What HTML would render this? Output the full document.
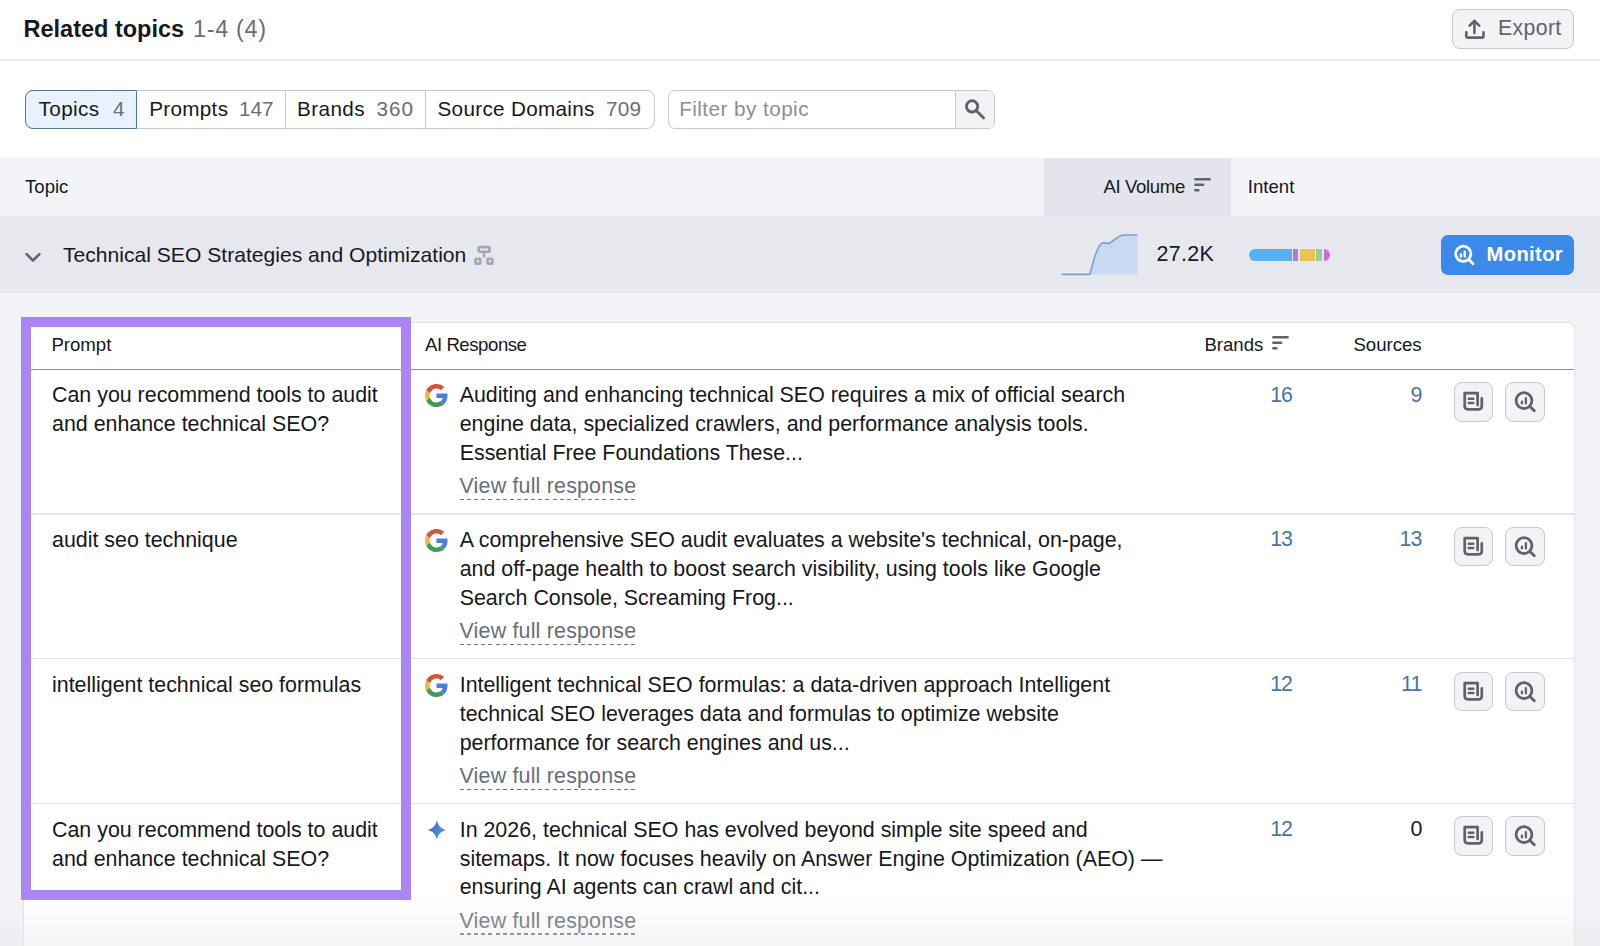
<!DOCTYPE html>
<html><head><meta charset="utf-8">
<style>
*{box-sizing:border-box;margin:0;padding:0}
html,body{width:1600px;height:946px;overflow:hidden;background:#fff;font-family:"Liberation Sans",sans-serif;color:#17181c}
.a{position:absolute;white-space:nowrap}
svg{position:absolute;overflow:visible}
</style></head><body>
<div class="a" style="left:23.5px;top:13.96px;font-size:23.5px;line-height:30px;font-weight:700;">Related topics</div>
<div class="a" style="left:193px;top:13.86px;font-size:23.5px;line-height:30px;color:#6b6d78;letter-spacing:0.65px;">1-4 (4)</div>
<div class="a" style="left:0px;top:59px;width:1600px;height:2px;background:#ebebee"></div>
<div class="a" style="left:1452px;top:9px;width:122px;height:40px;background:#f3f3f6;border:1.5px solid #c6c8cf;border-radius:8px"></div>
<svg style="left:1465px;top:19px" width="21" height="20" viewBox="0 0 21 20"><path d="M9.4 2V14" stroke="#5f626d" stroke-width="2.6" fill="none" stroke-linecap="round"/><path d="M4.6 6.6L9.4 1.8L14.2 6.6" stroke="#5f626d" stroke-width="2.6" fill="none" stroke-linecap="round" stroke-linejoin="round"/><path d="M1.3 13.4V17.6Q1.3 18.6 2.3 18.6H17.5Q18.5 18.6 18.5 17.6V13.4" stroke="#5f626d" stroke-width="2.6" fill="none" stroke-linecap="round" stroke-linejoin="round"/></svg>
<div class="a" style="left:1498px;top:12.65px;font-size:21.2px;line-height:30px;color:#5f626d;letter-spacing:0.4px;">Export</div>
<div class="a" style="left:25px;top:89.5px;width:630px;height:39.5px;background:#fff;border:1.5px solid #c6c8cf;border-radius:8px"></div>
<div class="a" style="left:25px;top:89.5px;width:112px;height:39.5px;background:#e8f2fc;border:1.8px solid #5a7790;border-radius:8px 0 0 8px"></div>
<div class="a" style="left:284.75px;top:90px;width:1.5px;height:38.5px;background:#c6c8cf"></div>
<div class="a" style="left:424.75px;top:90px;width:1.5px;height:38.5px;background:#c6c8cf"></div>
<div class="a" style="left:38.5px;top:94.08px;font-size:20.7px;line-height:30px;letter-spacing:0.4px;">Topics</div>
<div class="a" style="left:113px;top:94.08px;font-size:20.7px;line-height:30px;color:#6b6d78;">4</div>
<div class="a" style="left:149.2px;top:94.08px;font-size:20.7px;line-height:30px;letter-spacing:0.3px;">Prompts</div>
<div class="a" style="left:239px;top:94.08px;font-size:20.7px;line-height:30px;color:#6b6d78;">147</div>
<div class="a" style="left:297px;top:94.08px;font-size:20.7px;line-height:30px;letter-spacing:0.4px;">Brands</div>
<div class="a" style="left:376.5px;top:94.08px;font-size:20.7px;line-height:30px;color:#6b6d78;letter-spacing:1px;">360</div>
<div class="a" style="left:437.5px;top:94.08px;font-size:20.7px;line-height:30px;letter-spacing:0.3px;">Source Domains</div>
<div class="a" style="left:605.9px;top:94.08px;font-size:20.7px;line-height:30px;color:#6b6d78;letter-spacing:0.3px;">709</div>
<div class="a" style="left:667.5px;top:89.5px;width:327.5px;height:39.5px;background:#fff;border:1.5px solid #c6c8cf;border-radius:7px"></div>
<div class="a" style="left:955px;top:91px;width:38.5px;height:36.5px;background:#f3f3f6;border-left:1.5px solid #c6c8cf;border-radius:0 6px 6px 0"></div>
<div class="a" style="left:679.2px;top:94.08px;font-size:20.7px;line-height:30px;color:#8b8d96;letter-spacing:0.45px;">Filter by topic</div>
<svg style="left:964px;top:97px" width="22" height="22" viewBox="0 0 22 22"><circle cx="8.1" cy="9.4" r="5.6" stroke="#5f626d" stroke-width="2.9" fill="none"/><path d="M12.4 13.7L19.6 20.9" stroke="#5f626d" stroke-width="2.8" stroke-linecap="round"/></svg>
<div class="a" style="left:0px;top:158px;width:1600px;height:58px;background:#f3f4f8"></div>
<div class="a" style="left:1044px;top:158px;width:187px;height:58px;background:#e4e5ec"></div>
<div class="a" style="left:25px;top:174.06px;font-size:18.6px;line-height:26px;">Topic</div>
<div class="a" style="left:1103.4px;top:174.06px;font-size:18.6px;line-height:26px;letter-spacing:-0.35px;">AI Volume</div>
<svg style="left:1193px;top:177px" width="20" height="16" viewBox="0 0 20 16"><path d="M2.3 2.2H16.7M2.3 7.8H10.2M2.3 13.3H5.4" stroke="#5f626d" stroke-width="2.4" stroke-linecap="round"/></svg>
<div class="a" style="left:1247.8px;top:174.06px;font-size:18.6px;line-height:26px;">Intent</div>
<div class="a" style="left:0px;top:216px;width:1600px;height:77px;background:#e7e8ee"></div>
<div class="a" style="left:0px;top:291.5px;width:1600px;height:2px;background:#dfe0e6"></div>
<svg style="left:24px;top:251px" width="18" height="13" viewBox="0 0 18 13"><path d="M2.6 3.1L9 9.5L15.4 3.1" stroke="#62656f" stroke-width="2.6" fill="none" stroke-linecap="round" stroke-linejoin="round"/></svg>
<div class="a" style="left:63px;top:240.19px;font-size:21.1px;line-height:30px;">Technical SEO Strategies and Optimization</div>
<svg style="left:473px;top:244px" width="22" height="23" viewBox="0 0 22 23"><rect x="5.7" y="3.1" width="10.8" height="4.6" rx="0.6" stroke="#a5a7b0" stroke-width="2.6" fill="none"/><path d="M11.1 9V13.5" stroke="#a5a7b0" stroke-width="2.4"/><rect x="2.5" y="14.7" width="4.7" height="4.9" rx="0.6" stroke="#a5a7b0" stroke-width="2.6" fill="none"/><rect x="14.5" y="14.7" width="4.9" height="4.9" rx="0.6" stroke="#a5a7b0" stroke-width="2.6" fill="none"/></svg>
<svg style="left:1060px;top:232px" width="80" height="46" viewBox="0 0 80 46"><path d="M29.7 42.4C32 35 34 26 36.5 20C38.5 15 41 11 43 10.9L49.4 11.4C53 9 57 5 62.5 3H77.5V42.4Z" fill="#c7daf1"/><path d="M1.6 42.4H29.7C32 35 34 26 36.5 20C38.5 15 41 11 43 10.9L49.4 11.4C53 9 57 5 62.5 3H77.5" stroke="#7aa2cb" stroke-width="1.6" fill="none"/></svg>
<div class="a" style="left:1156.4px;top:239.35px;font-size:21.5px;line-height:30px;letter-spacing:0.3px;">27.2K</div>
<div class="a" style="left:1248.5px;top:249px;width:43px;height:11.5px;background:#58aff4;border-radius:6px 0 0 6px"></div>
<div class="a" style="left:1292.6px;top:249px;width:5.8px;height:11.5px;background:#a47fe3"></div>
<div class="a" style="left:1300.2px;top:249px;width:14.5px;height:11.5px;background:#f2c04e"></div>
<div class="a" style="left:1316.4px;top:249px;width:5.8px;height:11.5px;background:#90d09b"></div>
<div class="a" style="left:1323.8px;top:249px;width:6px;height:11.5px;background:#d066d8;border-radius:0 6px 6px 0"></div>
<div class="a" style="left:1441px;top:234.5px;width:133px;height:40.5px;background:#3b89e8;border-radius:7px"></div>
<svg style="left:1452px;top:243px" width="24" height="24" viewBox="0 0 24 24"><circle cx="11.3" cy="10.8" r="7.6" stroke="#fff" stroke-width="2.8" fill="none"/><path d="M17 16.6L21 20.8" stroke="#fff" stroke-width="2.8" stroke-linecap="round"/><path d="M9 11.5V13.6M12.8 8.6V13.6" stroke="#fff" stroke-width="2.4" stroke-linecap="round"/></svg>
<div class="a" style="left:1486.6px;top:239.04px;font-size:20.1px;line-height:30px;color:#fff;font-weight:700;letter-spacing:0.4px;">Monitor</div>
<div class="a" style="left:0px;top:293px;width:1600px;height:653px;background:#f3f4f8"></div>
<div class="a" style="left:22.8px;top:322px;width:1552px;height:624px;background:#fff;border:1.2px solid #e2e3e8;border-bottom:none;border-radius:7px 7px 0 0"></div>
<div class="a" style="left:51.4px;top:332.26px;font-size:18.6px;line-height:26px;">Prompt</div>
<div class="a" style="left:425px;top:332.26px;font-size:18.6px;line-height:26px;letter-spacing:-0.45px;">AI Response</div>
<div class="a" style="left:1204.4px;top:332.26px;font-size:18.6px;line-height:26px;">Brands</div>
<svg style="left:1270.5px;top:335px" width="20" height="16" viewBox="0 0 20 16"><path d="M2.3 2.2H16.7M2.3 7.8H10.2M2.3 13.3H5.4" stroke="#5f626d" stroke-width="2.4" stroke-linecap="round"/></svg>
<div class="a" style="left:1353.4px;top:332.26px;font-size:18.6px;line-height:26px;">Sources</div>
<div class="a" style="left:22px;top:368.5px;width:1552px;height:1.6px;background:#8e9097"></div>
<div class="a" style="left:52px;top:381.38px;font-size:21.4px;line-height:29px;">Can you recommend tools to audit</div>
<div class="a" style="left:52px;top:410.18px;font-size:21.4px;line-height:29px;">and enhance technical SEO?</div>
<svg style="left:425px;top:384.0px" width="23" height="23" viewBox="0 0 48 48"><path fill="#d2533f" d="M24 9.5c3.54 0 6.71 1.22 9.21 3.6l6.85-6.85C35.9 2.38 30.47 0 24 0 14.62 0 6.51 5.38 2.56 13.22l7.98 6.19C12.43 13.72 17.74 9.5 24 9.5z"/><path fill="#4a80dc" d="M46.98 24.55c0-1.57-.15-3.09-.38-4.55H24v9.02h12.94c-.58 2.96-2.26 5.48-4.78 7.18l7.73 6c4.51-4.18 7.09-10.36 7.09-17.65z"/><path fill="#e9b940" d="M10.53 28.59c-.48-1.45-.76-2.99-.76-4.59s.27-3.14.76-4.59l-7.98-6.19C.92 16.46 0 20.12 0 24c0 3.88.92 7.54 2.56 10.78l7.97-6.19z"/><path fill="#45995a" d="M24 48c6.48 0 11.93-2.13 15.89-5.81l-7.73-6c-2.15 1.45-4.92 2.3-8.16 2.3-6.26 0-11.57-4.22-13.47-9.91l-7.98 6.19C6.51 42.62 14.62 48 24 48z"/></svg>
<div class="a" style="left:459.7px;top:381.38px;font-size:21.4px;line-height:29px;">Auditing and enhancing technical SEO requires a mix of official search</div>
<div class="a" style="left:459.7px;top:410.18px;font-size:21.4px;line-height:29px;">engine data, specialized crawlers, and performance analysis tools.</div>
<div class="a" style="left:459.7px;top:438.98px;font-size:21.4px;line-height:29px;">Essential Free Foundations These...</div>
<div class="a" style="left:459.5px;top:472.38px;font-size:21.4px;line-height:29px;color:#6b6d78;letter-spacing:0.2px;">View full response</div>
<div class="a" style="left:459.5px;top:498.95px;width:175px;height:1.5px;background:repeating-linear-gradient(to right,#70727c 0 4px,transparent 4px 7.12px)"></div>
<div class="a" style="left:1292px;top:380.68px;font-size:21.4px;line-height:29px;color:#4674ab;transform:translateX(-100%);letter-spacing:-1px;">16</div>
<div class="a" style="left:1421.3px;top:380.68px;font-size:21.4px;line-height:29px;color:#4674ab;transform:translateX(-100%);letter-spacing:-1px;">9</div>
<div class="a" style="left:1453.5px;top:382.0px;width:39.5px;height:39.5px;background:#f3f3f6;border:1.5px solid #c6c8cf;border-radius:8px"></div>
<div class="a" style="left:1505.2px;top:382.0px;width:39.5px;height:39.5px;background:#f3f3f6;border:1.5px solid #c6c8cf;border-radius:8px"></div>
<svg style="left:1462px;top:390.0px" width="24" height="24" viewBox="0 0 24 24"><path d="M15.6 15.1V3.1H2.7V16.1Q2.7 19.3 5.9 19.3H16.6Q19.8 19.3 19.8 16.1V8.3" stroke="#5f626d" stroke-width="2.7" fill="none" stroke-linecap="round" stroke-linejoin="round"/><path d="M6.7 8.8H11.3M6.7 13H11.3" stroke="#5f626d" stroke-width="2.5" stroke-linecap="round"/></svg>
<svg style="left:1512px;top:389.0px" width="26" height="26" viewBox="0 0 26 26"><circle cx="12" cy="11.6" r="7.9" stroke="#5f626d" stroke-width="2.8" fill="none"/><path d="M17.9 17.5L22.3 21.8" stroke="#5f626d" stroke-width="2.8" stroke-linecap="round"/><path d="M9.9 12.6V14.4M13.9 9.2V14.4" stroke="#5f626d" stroke-width="2.3" stroke-linecap="round"/></svg>
<div class="a" style="left:22px;top:513.0px;width:1552px;height:1.6px;background:#e4e5ea"></div>
<div class="a" style="left:52px;top:526.18px;font-size:21.4px;line-height:29px;">audit seo technique</div>
<svg style="left:425px;top:528.8px" width="23" height="23" viewBox="0 0 48 48"><path fill="#d2533f" d="M24 9.5c3.54 0 6.71 1.22 9.21 3.6l6.85-6.85C35.9 2.38 30.47 0 24 0 14.62 0 6.51 5.38 2.56 13.22l7.98 6.19C12.43 13.72 17.74 9.5 24 9.5z"/><path fill="#4a80dc" d="M46.98 24.55c0-1.57-.15-3.09-.38-4.55H24v9.02h12.94c-.58 2.96-2.26 5.48-4.78 7.18l7.73 6c4.51-4.18 7.09-10.36 7.09-17.65z"/><path fill="#e9b940" d="M10.53 28.59c-.48-1.45-.76-2.99-.76-4.59s.27-3.14.76-4.59l-7.98-6.19C.92 16.46 0 20.12 0 24c0 3.88.92 7.54 2.56 10.78l7.97-6.19z"/><path fill="#45995a" d="M24 48c6.48 0 11.93-2.13 15.89-5.81l-7.73-6c-2.15 1.45-4.92 2.3-8.16 2.3-6.26 0-11.57-4.22-13.47-9.91l-7.98 6.19C6.51 42.62 14.62 48 24 48z"/></svg>
<div class="a" style="left:459.7px;top:526.18px;font-size:21.4px;line-height:29px;">A comprehensive SEO audit evaluates a website's technical, on-page,</div>
<div class="a" style="left:459.7px;top:554.98px;font-size:21.4px;line-height:29px;">and off-page health to boost search visibility, using tools like Google</div>
<div class="a" style="left:459.7px;top:583.78px;font-size:21.4px;line-height:29px;">Search Console, Screaming Frog...</div>
<div class="a" style="left:459.5px;top:617.18px;font-size:21.4px;line-height:29px;color:#6b6d78;letter-spacing:0.2px;">View full response</div>
<div class="a" style="left:459.5px;top:643.75px;width:175px;height:1.5px;background:repeating-linear-gradient(to right,#70727c 0 4px,transparent 4px 7.12px)"></div>
<div class="a" style="left:1292px;top:525.48px;font-size:21.4px;line-height:29px;color:#4674ab;transform:translateX(-100%);letter-spacing:-1px;">13</div>
<div class="a" style="left:1421.3px;top:525.48px;font-size:21.4px;line-height:29px;color:#4674ab;transform:translateX(-100%);letter-spacing:-1px;">13</div>
<div class="a" style="left:1453.5px;top:526.8px;width:39.5px;height:39.5px;background:#f3f3f6;border:1.5px solid #c6c8cf;border-radius:8px"></div>
<div class="a" style="left:1505.2px;top:526.8px;width:39.5px;height:39.5px;background:#f3f3f6;border:1.5px solid #c6c8cf;border-radius:8px"></div>
<svg style="left:1462px;top:534.8px" width="24" height="24" viewBox="0 0 24 24"><path d="M15.6 15.1V3.1H2.7V16.1Q2.7 19.3 5.9 19.3H16.6Q19.8 19.3 19.8 16.1V8.3" stroke="#5f626d" stroke-width="2.7" fill="none" stroke-linecap="round" stroke-linejoin="round"/><path d="M6.7 8.8H11.3M6.7 13H11.3" stroke="#5f626d" stroke-width="2.5" stroke-linecap="round"/></svg>
<svg style="left:1512px;top:533.8px" width="26" height="26" viewBox="0 0 26 26"><circle cx="12" cy="11.6" r="7.9" stroke="#5f626d" stroke-width="2.8" fill="none"/><path d="M17.9 17.5L22.3 21.8" stroke="#5f626d" stroke-width="2.8" stroke-linecap="round"/><path d="M9.9 12.6V14.4M13.9 9.2V14.4" stroke="#5f626d" stroke-width="2.3" stroke-linecap="round"/></svg>
<div class="a" style="left:22px;top:657.8000000000001px;width:1552px;height:1.6px;background:#e4e5ea"></div>
<div class="a" style="left:52px;top:670.98px;font-size:21.4px;line-height:29px;">intelligent technical seo formulas</div>
<svg style="left:425px;top:673.6px" width="23" height="23" viewBox="0 0 48 48"><path fill="#d2533f" d="M24 9.5c3.54 0 6.71 1.22 9.21 3.6l6.85-6.85C35.9 2.38 30.47 0 24 0 14.62 0 6.51 5.38 2.56 13.22l7.98 6.19C12.43 13.72 17.74 9.5 24 9.5z"/><path fill="#4a80dc" d="M46.98 24.55c0-1.57-.15-3.09-.38-4.55H24v9.02h12.94c-.58 2.96-2.26 5.48-4.78 7.18l7.73 6c4.51-4.18 7.09-10.36 7.09-17.65z"/><path fill="#e9b940" d="M10.53 28.59c-.48-1.45-.76-2.99-.76-4.59s.27-3.14.76-4.59l-7.98-6.19C.92 16.46 0 20.12 0 24c0 3.88.92 7.54 2.56 10.78l7.97-6.19z"/><path fill="#45995a" d="M24 48c6.48 0 11.93-2.13 15.89-5.81l-7.73-6c-2.15 1.45-4.92 2.3-8.16 2.3-6.26 0-11.57-4.22-13.47-9.91l-7.98 6.19C6.51 42.62 14.62 48 24 48z"/></svg>
<div class="a" style="left:459.7px;top:670.98px;font-size:21.4px;line-height:29px;">Intelligent technical SEO formulas: a data-driven approach Intelligent</div>
<div class="a" style="left:459.7px;top:699.78px;font-size:21.4px;line-height:29px;">technical SEO leverages data and formulas to optimize website</div>
<div class="a" style="left:459.7px;top:728.58px;font-size:21.4px;line-height:29px;">performance for search engines and us...</div>
<div class="a" style="left:459.5px;top:761.98px;font-size:21.4px;line-height:29px;color:#6b6d78;letter-spacing:0.2px;">View full response</div>
<div class="a" style="left:459.5px;top:788.55px;width:175px;height:1.5px;background:repeating-linear-gradient(to right,#70727c 0 4px,transparent 4px 7.12px)"></div>
<div class="a" style="left:1292px;top:670.28px;font-size:21.4px;line-height:29px;color:#4674ab;transform:translateX(-100%);letter-spacing:-1px;">12</div>
<div class="a" style="left:1421.3px;top:670.28px;font-size:21.4px;line-height:29px;color:#4674ab;transform:translateX(-100%);letter-spacing:-1px;">11</div>
<div class="a" style="left:1453.5px;top:671.6px;width:39.5px;height:39.5px;background:#f3f3f6;border:1.5px solid #c6c8cf;border-radius:8px"></div>
<div class="a" style="left:1505.2px;top:671.6px;width:39.5px;height:39.5px;background:#f3f3f6;border:1.5px solid #c6c8cf;border-radius:8px"></div>
<svg style="left:1462px;top:679.6px" width="24" height="24" viewBox="0 0 24 24"><path d="M15.6 15.1V3.1H2.7V16.1Q2.7 19.3 5.9 19.3H16.6Q19.8 19.3 19.8 16.1V8.3" stroke="#5f626d" stroke-width="2.7" fill="none" stroke-linecap="round" stroke-linejoin="round"/><path d="M6.7 8.8H11.3M6.7 13H11.3" stroke="#5f626d" stroke-width="2.5" stroke-linecap="round"/></svg>
<svg style="left:1512px;top:678.6px" width="26" height="26" viewBox="0 0 26 26"><circle cx="12" cy="11.6" r="7.9" stroke="#5f626d" stroke-width="2.8" fill="none"/><path d="M17.9 17.5L22.3 21.8" stroke="#5f626d" stroke-width="2.8" stroke-linecap="round"/><path d="M9.9 12.6V14.4M13.9 9.2V14.4" stroke="#5f626d" stroke-width="2.3" stroke-linecap="round"/></svg>
<div class="a" style="left:22px;top:802.6000000000001px;width:1552px;height:1.6px;background:#e4e5ea"></div>
<div class="a" style="left:52px;top:815.78px;font-size:21.4px;line-height:29px;">Can you recommend tools to audit</div>
<div class="a" style="left:52px;top:844.58px;font-size:21.4px;line-height:29px;">and enhance technical SEO?</div>
<svg style="left:425.5px;top:819.2px" width="22" height="22" viewBox="0 0 22 22"><defs><linearGradient id="sg" x1="0" y1="0.3" x2="1" y2="0.7"><stop offset="0" stop-color="#6a5cb8"/><stop offset="0.5" stop-color="#4b7ed8"/><stop offset="1" stop-color="#3f9be2"/></linearGradient></defs><path d="M10.9 1C11.9 6.6 15 9.9 20.5 10.9C15 11.9 11.9 15.2 10.9 20.8C9.9 15.2 6.8 11.9 1.2 10.9C6.8 9.9 9.9 6.6 10.9 1Z" fill="url(#sg)"/></svg>
<div class="a" style="left:459.7px;top:815.78px;font-size:21.4px;line-height:29px;">In 2026, technical SEO has evolved beyond simple site speed and</div>
<div class="a" style="left:459.7px;top:844.58px;font-size:21.4px;line-height:29px;">sitemaps. It now focuses heavily on Answer Engine Optimization (AEO) —</div>
<div class="a" style="left:459.7px;top:873.38px;font-size:21.4px;line-height:29px;">ensuring AI agents can crawl and cit...</div>
<div class="a" style="left:459.5px;top:906.78px;font-size:21.4px;line-height:29px;color:#6b6d78;letter-spacing:0.2px;">View full response</div>
<div class="a" style="left:459.5px;top:933.35px;width:175px;height:1.5px;background:repeating-linear-gradient(to right,#70727c 0 4px,transparent 4px 7.12px)"></div>
<div class="a" style="left:1292px;top:815.08px;font-size:21.4px;line-height:29px;color:#4674ab;transform:translateX(-100%);letter-spacing:-1px;">12</div>
<div class="a" style="left:1421.3px;top:815.08px;font-size:21.4px;line-height:29px;color:#17181c;transform:translateX(-100%);letter-spacing:-1px;">0</div>
<div class="a" style="left:1453.5px;top:816.4000000000001px;width:39.5px;height:39.5px;background:#f3f3f6;border:1.5px solid #c6c8cf;border-radius:8px"></div>
<div class="a" style="left:1505.2px;top:816.4000000000001px;width:39.5px;height:39.5px;background:#f3f3f6;border:1.5px solid #c6c8cf;border-radius:8px"></div>
<svg style="left:1462px;top:824.4px" width="24" height="24" viewBox="0 0 24 24"><path d="M15.6 15.1V3.1H2.7V16.1Q2.7 19.3 5.9 19.3H16.6Q19.8 19.3 19.8 16.1V8.3" stroke="#5f626d" stroke-width="2.7" fill="none" stroke-linecap="round" stroke-linejoin="round"/><path d="M6.7 8.8H11.3M6.7 13H11.3" stroke="#5f626d" stroke-width="2.5" stroke-linecap="round"/></svg>
<svg style="left:1512px;top:823.4px" width="26" height="26" viewBox="0 0 26 26"><circle cx="12" cy="11.6" r="7.9" stroke="#5f626d" stroke-width="2.8" fill="none"/><path d="M17.9 17.5L22.3 21.8" stroke="#5f626d" stroke-width="2.8" stroke-linecap="round"/><path d="M9.9 12.6V14.4M13.9 9.2V14.4" stroke="#5f626d" stroke-width="2.3" stroke-linecap="round"/></svg>
<div class="a" style="left:21.1px;top:317.2px;width:390.2px;height:582.8px;border:10.8px solid #ad84f3"></div>
<div class="a" style="left:0px;top:896px;width:1600px;height:50px;background:linear-gradient(to bottom, rgba(236,236,240,0) 0%, rgba(228,228,233,0.38) 100%)"></div>
</body></html>
